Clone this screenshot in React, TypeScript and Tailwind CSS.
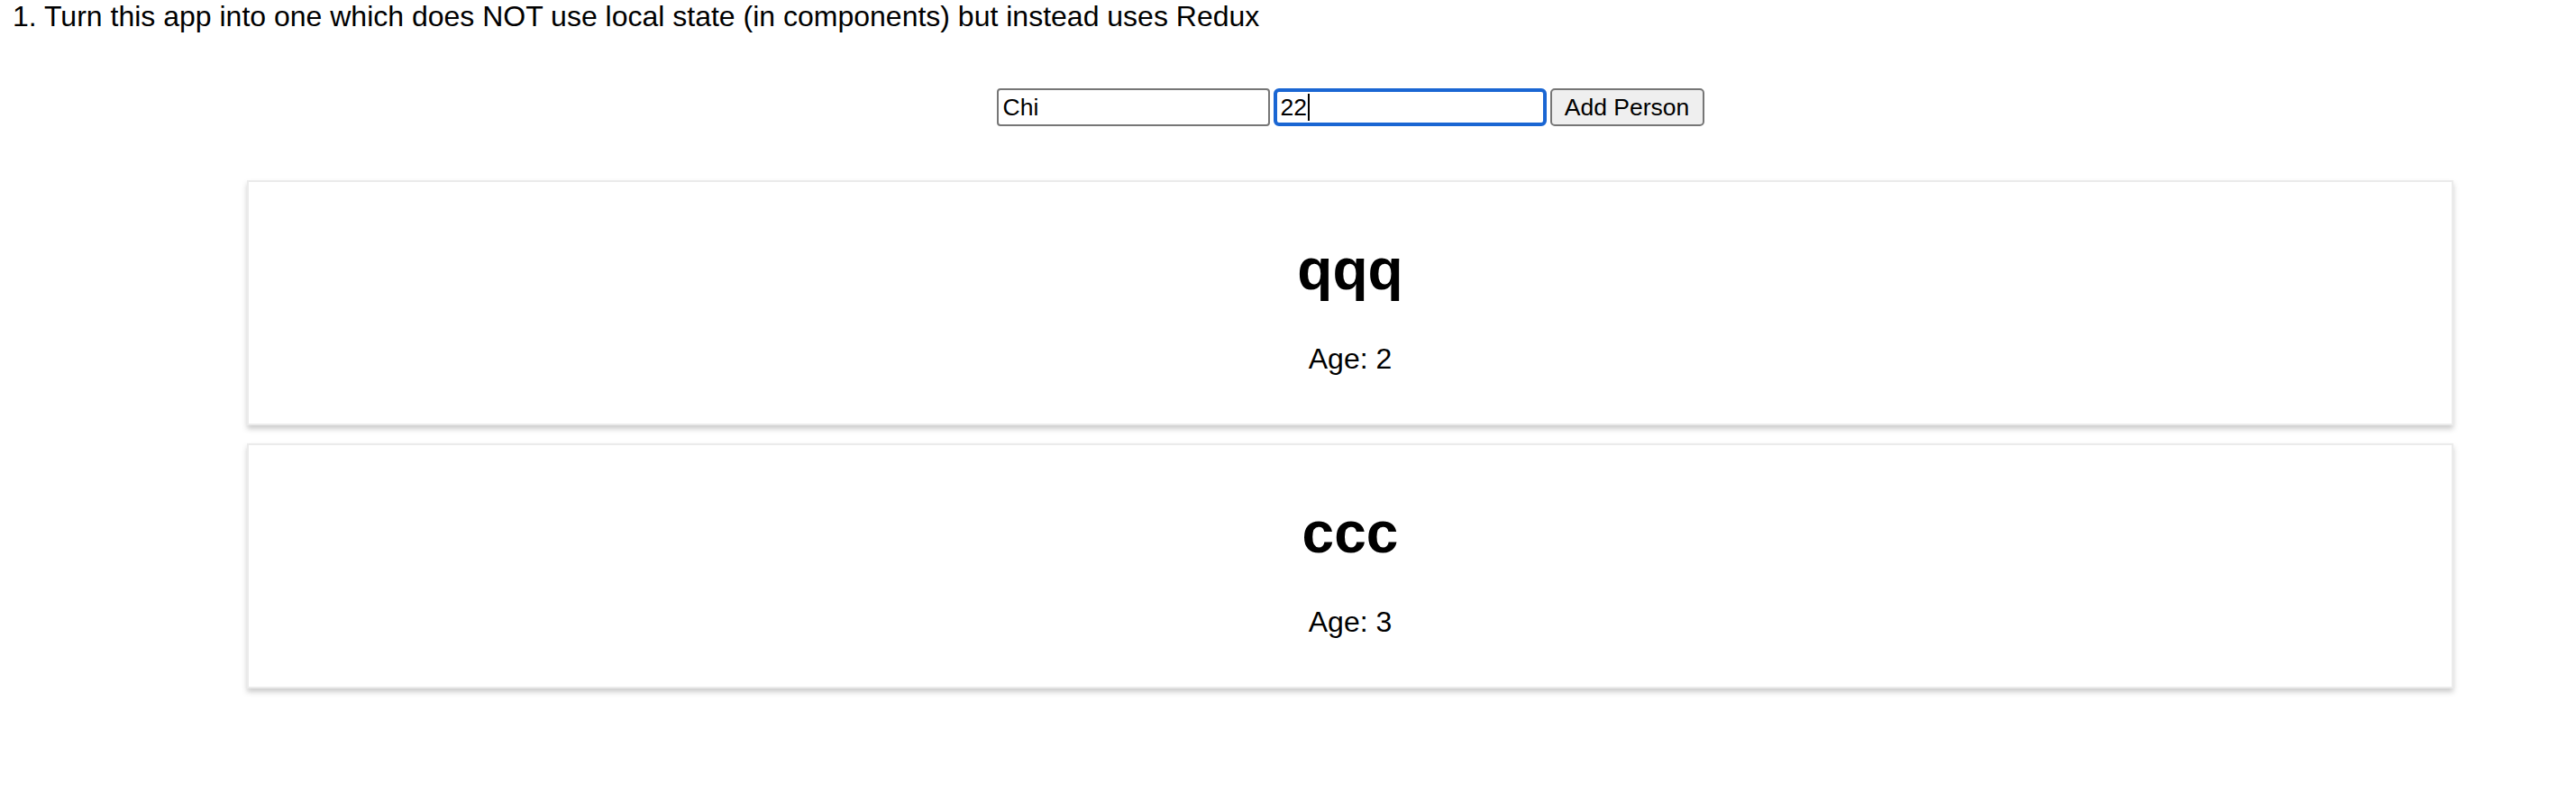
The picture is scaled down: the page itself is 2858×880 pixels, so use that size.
import React from 'react';

interface Person {
  id: number;
  name: string;
  age: number;
}

const persons: Person[] = [
  { id: 1, name: 'qqq', age: 2 },
  { id: 2, name: 'ccc', age: 3 },
];

const PersonCard = ({ name, age }: { name: string; age: number }) => (
  <div className="w-[2448px] mx-auto border-2 border-[#ebebeb] bg-white shadow-[0_4px_6px_#cccccc] pt-[60px] pb-[53px] text-center">
    <h1 className="m-0 text-[64px] leading-[74px] font-bold text-black">{name}</h1>
    <p className="mt-[44px] text-[32px] leading-[37px] text-black">Age: {age}</p>
  </div>
);

const AddPerson = () => (
  <div className="flex justify-center gap-[4px]">
    <input
      readOnly
      value="Chi"
      className="w-[303px] h-[42px] border-2 border-[#767676] rounded-[4px] bg-white pl-[5px] text-[26.5px] text-black outline-none"
    />
    <div className="relative">
      <input
        readOnly
        value="22"
        className="w-[303px] h-[42px] border-[4px] border-[#1a66d3] rounded-[6px] bg-white pl-[4px] text-[26.5px] text-black outline-none"
      />
      {/* caret */}
      <span className="absolute left-[38px] top-[6px] w-[2px] h-[30px] bg-black" />
    </div>
    <button className="w-[171px] h-[42px] border-2 border-[#767676] rounded-[5px] bg-[#efefef] text-[26.5px] text-black">
      Add Person
    </button>
  </div>
);

export default function App() {
  return (
    <div className="w-full overflow-hidden bg-white font-['Liberation_Sans',Arial,sans-serif] min-h-[880px]">
      <div className="w-[2996px]">
        <p className="pl-[14px] text-[32px] leading-[37px] text-black">
          1. Turn this app into one which does NOT use local state (in components) but instead uses Redux
        </p>
        <div className="mt-[61px]">
          <AddPerson />
        </div>
        <div className="mt-[60px] flex flex-col gap-[20px]">
          {persons.map((p) => (
            <PersonCard key={p.id} name={p.name} age={p.age} />
          ))}
        </div>
      </div>
    </div>
  );
}
